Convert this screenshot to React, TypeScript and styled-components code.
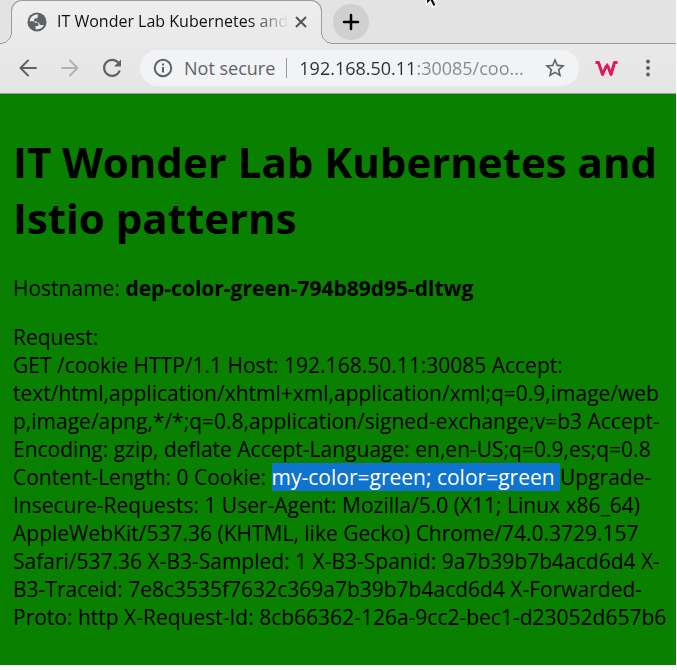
import React from "react";
import styled, { createGlobalStyle } from "styled-components";

const ink = "#5f6368";
const outline = "#9b9b9b";
const stripColor = "#e3e3e3";
const barColor = "#e9e9e9";

const GlobalStyle = createGlobalStyle`
  * { box-sizing: border-box; }
  body {
    margin: 0;
    background: #fff;
    font-family: "Open Sans", "Noto Sans", sans-serif;
  }
`;

const Browser = styled.div`
  position: relative;
  margin: 0 1px 0 0;
`;

const TabStrip = styled.div`
  display: flex;
  align-items: center;
  height: 44px;
  padding-left: 11px;
  background: ${stripColor};
  border-bottom: 1px solid ${outline};
`;

const Tab = styled.div`
  position: relative;
  display: flex;
  align-items: center;
  width: 311px;
  height: 44px;
  margin-bottom: -1px;
  padding: 0 12px 1px 14px;
  background: linear-gradient(#eeeeee, ${barColor});
  border: 1px solid ${outline};
  border-bottom: 0;
  border-radius: 11px 11px 0 0;

  &::before,
  &::after {
    content: "";
    position: absolute;
    bottom: 0;
    width: 12px;
    height: 12px;
  }
  &::before {
    left: -12px;
    background: radial-gradient(circle at 0 0, ${stripColor} 11px, ${outline} 11px, ${outline} 12px, ${barColor} 12px);
  }
  &::after {
    right: -12px;
    background: radial-gradient(circle at 100% 0, ${stripColor} 11px, ${outline} 11px, ${outline} 12px, ${barColor} 12px);
  }
`;

const TabTitle = styled.span`
  flex: 1;
  margin-left: 9px;
  overflow: hidden;
  white-space: nowrap;
  font-size: 16px;
  line-height: 24px;
  margin-bottom: 2px;
  color: #111;
  mask-image: linear-gradient(90deg, #000 calc(100% - 44px), transparent calc(100% - 4px));
`;

const IconButton = styled.button<{ $size?: number }>`
  display: flex;
  flex: none;
  align-items: center;
  justify-content: center;
  width: ${(p) => p.$size ?? 24}px;
  height: ${(p) => p.$size ?? 24}px;
  padding: 0;
  border: 0;
  background: none;
`;

const NewTab = styled(IconButton)`
  margin-left: 11px;
  border-radius: 50%;
  background: #d0d0d0;
`;

const Toolbar = styled.div`
  display: flex;
  align-items: center;
  height: 50px;
  padding: 0 16px 2px;
  background: linear-gradient(${barColor}, #e5e5e5);
  border-bottom: 1px solid ${outline};
`;

const NavGroup = styled.nav`
  display: flex;
  gap: 18px;
`;

const AddressBar = styled.div`
  display: flex;
  flex: 1;
  align-items: center;
  min-width: 0;
  height: 36px;
  margin: 0 15px 0 16px;
  padding: 0 12px;
  border-radius: 18px;
  background: #f1f3f5;
`;

const Security = styled.label`
  margin-left: 10px;
  padding-right: 11px;
  border-right: 1px solid #999;
  font-size: 18px;
  line-height: 20px;
  white-space: nowrap;
  color: ${ink};
`;

const Address = styled.input`
  flex: 1;
  min-width: 0;
  height: 28px;
  margin-left: 12px;
  padding: 0;
  border: 0;
  outline: 0;
  font: 18px "Open Sans", "Noto Sans", sans-serif;
  text-overflow: ellipsis;
  color: transparent;
  background: linear-gradient(90deg, #2c2e31 118px, #85888c 118px);
  background-clip: text;
`;

const Actions = styled.div`
  display: flex;
  gap: 18px;
`;

const Pointer = styled.svg`
  position: absolute;
  top: 0;
  left: 424px;
`;

const Page = styled.main`
  padding: 40px 8px 34px 13px;
  background: #0a8000;
  color: #000;
  font-size: 21px;
  line-height: 28px;
`;

const Heading = styled.h1`
  margin: 0 0 28px;
  font-size: 42px;
  line-height: 56px;
`;

const Paragraph = styled.p`
  margin: 0 0 21px;
  overflow-wrap: break-word;
  &:last-child { margin-bottom: 0; }
`;

const Selected = styled.mark`
  color: #fff;
  background: #0f74ce;
`;

const Stroke = ({ d, color = ink, weight = 2 }: { d: string; color?: string; weight?: number }) => (
  <svg width="24" height="24" viewBox="0 0 24 24" fill="none" stroke={color} strokeWidth={weight} strokeLinecap="round" strokeLinejoin="round">
    <path d={d} />
  </svg>
);

export default function App() {
  return (
    <>
      <GlobalStyle />
      <Browser>
        <TabStrip>
          <Tab>
            <svg width="22" height="22" viewBox="0 0 24 24">
              <circle cx="12" cy="12" r="10.400" fill={ink} />
              <path
                d="M10 4.200C6.300 5.200 4.200 8 4 11.300H9.300c3.300 0 4.600 1.900 4.300 5H10.400v3.500c3.600.800 7.400-.900 9.100-4.600h-3.700c-1-.100-1.400-1-1.500-2.400h-3.800c-1-.100-1.600-.900-1.600-2V9.500c0-.900.600-1.600 1.600-1.700h2.200V5.800c0-.800.200-1.300.700-1.800-1.100-.200-2.300-.100-3.400.200z"
                fill="#ececec"
              />
            </svg>
            <TabTitle>IT Wonder Lab Kubernetes and</TabTitle>
            <IconButton $size={16} aria-label="Close tab">
              <svg width="12" height="12" viewBox="0 0 12 12" stroke="#555" strokeWidth="2">
                <path d="M1 1l10 10M11 1L1 11" />
              </svg>
            </IconButton>
          </Tab>
          <NewTab $size={36} aria-label="New tab">
            <Stroke d="M12 5v14M5 12h14" color="#000" weight={2.5} />
          </NewTab>
        </TabStrip>
        <Toolbar>
          <NavGroup>
            <IconButton aria-label="Back"><Stroke d="M20 12H5M12 4.500L4.500 12l7.500 7.500" /></IconButton>
            <IconButton aria-label="Forward"><Stroke d="M4 12h15M12 4.500l7.500 7.500-7.500 7.500" color="#b0b2b5" /></IconButton>
            <IconButton aria-label="Reload">
              <svg width="24" height="24" viewBox="0 0 24 24">
                <path d="M18.500 7A8 8 0 1 0 19.700 14.500" fill="none" stroke={ink} strokeWidth="2.200" />
                <path d="M21 3.500V10.500H14z" fill={ink} />
              </svg>
            </IconButton>
          </NavGroup>
          <AddressBar>
            <svg width="22" height="22" viewBox="0 0 24 24" fill="none" stroke={ink} strokeWidth="2.200">
              <circle cx="12" cy="12" r="9" />
              <path d="M12 11v6M12 7v2.200" />
            </svg>
            <Security htmlFor="address">Not secure</Security>
            <Address id="address" readOnly value="192.168.50.11:30085/coo..." />
            <IconButton aria-label="Bookmark this page">
              <svg width="24" height="24" viewBox="0 0 24 24" fill={ink}>
                <path d="M22 9.240l-7.190-.620L12 2 9.190 8.630 2 9.240l5.460 4.730L5.820 21 12 17.270 18.180 21l-1.630-7.030L22 9.240zM12 15.400l-3.760 2.270 1-4.280-3.320-2.880 4.380-.380L12 6.100l1.710 4.040 4.380.380-3.320 2.880 1 4.280L12 15.400z" />
              </svg>
            </IconButton>
          </AddressBar>
          <Actions>
            <IconButton aria-label="Extension">
              <svg width="24" height="24" viewBox="0 0 24 24" fill="none" stroke="#e0185d" strokeWidth="3" strokeLinejoin="round">
                <path d="M1.500 6.500H4.500L8.500 18.500 12 10.500h2L17 18.500 20.500 6.500h3" />
                <path d="M12 12.500l1.500-5" strokeWidth="2" />
              </svg>
            </IconButton>
            <IconButton aria-label="Menu">
              <svg width="24" height="24" viewBox="0 0 24 24" fill={ink}>
                <circle cx="12" cy="5.500" r="2" />
                <circle cx="12" cy="12" r="2" />
                <circle cx="12" cy="18.500" r="2" />
              </svg>
            </IconButton>
          </Actions>
        </Toolbar>
        <Page>
          <Heading>IT Wonder Lab Kubernetes and Istio patterns</Heading>
          <Paragraph>
            Hostname: <b>dep-color-green-794b89d95-dltwg</b>
          </Paragraph>
          <Paragraph>
            Request:
            <br />
            GET /cookie HTTP/1.1 Host: 192.168.50.11:30085 Accept:{" "}
            text/html,application/xhtml+xml,application/xml;q=0.9,image/webp,image/apng,*/*;q=0.8,application/signed-exchange;v=b3{" "}
            Accept-Encoding: gzip, deflate Accept-Language: en,en-US;q=0.9,es;q=0.8 Content-Length: 0 Cookie:{" "}
            <Selected>my-color=green; color=green </Selected>
            Upgrade-Insecure-Requests: 1 User-Agent: Mozilla/5.0 (X11; Linux x86_64) AppleWebKit/537.36 (KHTML, like Gecko){" "}
            Chrome/74.0.3729.157 Safari/537.36 X-B3-Sampled: 1 X-B3-Spanid: 9a7b39b7b4acd6d4 X-B3-Traceid:{" "}
            7e8c3535f7632c369a7b39b7b4acd6d4 X-Forwarded-Proto: http X-Request-Id: 8cb66362-126a-9cc2-bec1-d23052d657b6
          </Paragraph>
        </Page>
        <Pointer width="16" height="9" viewBox="0 0 16 9" aria-hidden="true">
          <path d="M2 0V6L6 2.500 8.500 8l4-2L10 1h4V0z" fill="#fff" />
          <path d="M3 0v3.500L6.500 0l3 6 1.800-1L9 0z" fill="#111" />
        </Pointer>
      </Browser>
    </>
  );
}
